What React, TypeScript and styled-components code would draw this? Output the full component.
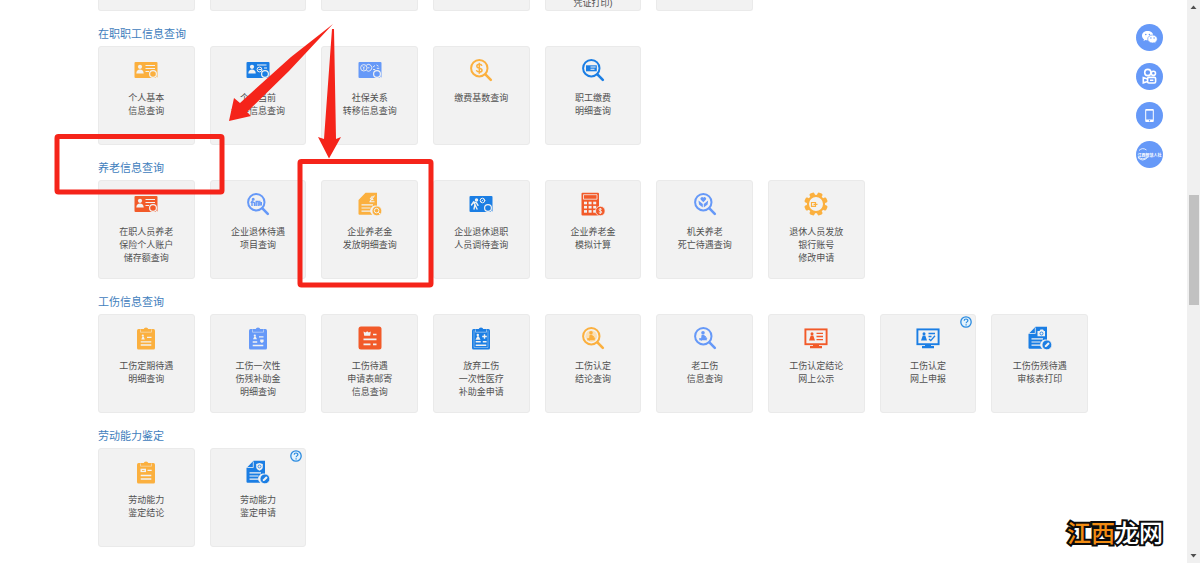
import React from 'react';
import styled, { createGlobalStyle } from 'styled-components';

const YELLOW = '#fbb03f';
const BLUE = '#1b7ee4';
const SKY = '#6699f8';
const RED = '#f25a29';
const CARD = '#f2f2f2';
const MARK = '#f5241a';

const GlobalStyle = createGlobalStyle`
  * { box-sizing: border-box; }
  body {
    margin: 0;
    background: #fff;
    font-family: "Liberation Sans", "Noto Sans CJK SC", sans-serif;
  }
`;

const Page = styled.div`
  position: relative;
  display: flex;
  min-height: 100vh;
  overflow: hidden;
`;

const Main = styled.main`
  flex: 1;
  padding: 0 99px 16px 98px;
`;

const Section = styled.section`
  display: flex;
  flex-direction: column;
`;

const Heading = styled.h2`
  margin: 0;
  padding: 15px 0 4px;
  font-size: 11px;
  line-height: 16px;
  font-weight: 400;
  color: #3f80bd;
`;

const Grid = styled.ul`
  display: grid;
  grid-template-columns: repeat(9, 1fr);
  gap: 15px;
  margin: 0;
  padding: 0;
  list-style: none;
`;

const Cell = styled.li`
  position: relative;
`;

const Card = styled.a`
  display: flex;
  flex-direction: column;
  align-items: center;
  gap: 10px;
  height: 99px;
  padding-top: 11px;
  border: 1px solid #eaeaea;
  border-radius: 3px;
  background: ${CARD};
  color: #505050;
  font-size: 9px;
  line-height: 13px;
  text-align: center;
  text-decoration: none;
`;

const CardTail = styled(Card)`
  height: 11px;
  padding: 0;
  justify-content: flex-end;
  overflow: hidden;
  border-top: 0;
  border-radius: 0 0 3px 3px;
`;

const Line = styled.span`
  display: block;
  flex-shrink: 0;
  white-space: nowrap;
`;

const Help = styled.button`
  position: absolute;
  top: 2px;
  right: 4px;
  width: 12px;
  height: 12px;
  padding: 0;
  border: 0;
  background: none;
  cursor: pointer;
  svg { display: block; }
`;

const Dock = styled.nav`
  position: absolute;
  top: 24px;
  right: 37px;
  display: flex;
  flex-direction: column;
  gap: 12px;
`;

const DockButton = styled.button`
  position: relative;
  display: flex;
  align-items: center;
  justify-content: center;
  width: 27px;
  height: 27px;
  padding: 0;
  border: 0;
  border-radius: 50%;
  background: ${SKY};
  color: #fff;
  font-family: inherit;
  font-size: 4px;
  font-weight: 700;
  white-space: nowrap;
  cursor: pointer;
`;

const Swoosh = styled.svg`
  position: absolute;
  inset: 0;
`;

const Scrollbar = styled.div`
  display: flex;
  flex-direction: column;
  align-items: center;
  width: 13px;
  background: #f0f0f0;
`;

const Arrow = styled.svg`
  flex: none;
  width: 13px;
  height: 14px;
`;

const Gap = styled.div<{ $grow: number }>`
  flex: ${p => p.$grow} 0 0;
`;

const Thumb = styled.div`
  flex: 110 0 0;
  width: 10px;
  background: #c1c1c1;
`;

const Marks = styled.svg`
  position: absolute;
  top: 0;
  left: 0;
  pointer-events: none;
`;

const Watermark = styled.div`
  position: absolute;
  right: 37px;
  bottom: 13px;
  font-family: "Noto Sans CJK SC", sans-serif;
  font-size: 24px;
  line-height: 36px;
  font-weight: 500;
  color: #fff;
  -webkit-text-stroke: 4px #0c0c0c;
  paint-order: stroke fill;
  span { color: #f28c13; }
`;

type IconName =
  | 'idLines' | 'idAt' | 'idCoins' | 'idRetire'
  | 'magDollar' | 'magCard' | 'magPeople' | 'magHeart' | 'magWorker' | 'magWorkerSoft'
  | 'docPen' | 'docShield' | 'docCamera' | 'calc' | 'gear'
  | 'clip' | 'clipPlus' | 'clipSeal' | 'clipPlain' | 'form'
  | 'screenLines' | 'screenCheck';

const Person = () => (
  <g fill={CARD}>
    <circle cx="6" cy="8.8" r="2.1" />
    <path d="M2.3 15.5c0-2.8 1.6-4 3.7-4s3.7 1.2 3.7 4z" />
  </g>
);

const Lens = ({ c }: { c: string }) => (
  <g fill="none" stroke={CARD} strokeWidth="1.2">
    <circle cx="19" cy="16" r="3.4" fill={c} />
    <path d="M21.4 18.4l2 2" />
  </g>
);

const Worker = ({ c }: { c: string }) => (
  <g fill={c}>
    <circle cx="10" cy="6.7" r="1.8" />
    <path d="M8.6 8.7h2.6l1.4 2.5 1.6 3H6.2l.6-2.2 1.3.3z" />
    <path d="M6.2 12.5l2.4 2M12 10l2 3" stroke={c} strokeWidth="1" />
  </g>
);

const Mag = ({ c, children }: { c: string; children: React.ReactNode }) => (
  <>
    <circle cx="10.3" cy="10.2" r="8.2" fill="none" stroke={c} strokeWidth="2" />
    <path d="M16.4 16.4l5.4 5.4" stroke={c} strokeWidth="2.6" strokeLinecap="round" />
    {children}
  </>
);

const Id = ({ c, children }: { c: string; children: React.ReactNode }) => (
  <>
    <rect x=".5" y="4" width="23" height="16" rx="1" fill={c} />
    {children}
    <Lens c={c} />
  </>
);

const Clip = ({ c, children }: { c: string; children: React.ReactNode }) => (
  <>
    <rect x="3" y="3" width="18" height="20.5" rx="1.5" fill={c} />
    <path d="M7 6V3.2h2.6a2.5 2.5 0 0 1 4.8 0H17V6z" fill={c} />
    <path d="M6.5 3.4v2.800h11v-2.800" fill="none" stroke={CARD} strokeWidth=".5" />
    {children}
  </>
);

const Screen = ({ c, children }: { c: string; children: React.ReactNode }) => (
  <>
    <rect x="1.4" y="3.4" width="21.2" height="14.8" fill="none" stroke={c} strokeWidth="1.9" />
    <path d="M9 18h6v2h3v2.200H6V20h3z" fill={c} />
    <circle cx="8" cy="7.700" r="1.500" fill={c} />
    <path d="M5 14.500l1.800-5h2.500l1.700 5z" fill={c} />
    {children}
  </>
);

const Doc = ({ c, children }: { c: string; children: React.ReactNode }) => (
  <>
    <path d="M7.500 .7H19V14a5 5 0 0 0-4.600 8.800H1.500a1 1 0 0 1-1-1V8z" fill={c} />
    <path d="M3.500 12.900H15M3.500 16h9M3.500 19.100h9" stroke={CARD} strokeWidth="1.200" />
    {children}
  </>
);

const Fold = () => <path d="M7.300 1.500v6H1.200" fill="none" stroke={CARD} strokeWidth=".8" />;

const Pen = ({ c }: { c: string }) => (
  <>
    <circle cx="18.900" cy="18.900" r="4.900" fill={c} stroke={CARD} strokeWidth=".8" />
    <path d="M16.700 21.200l.5-2 3-3 1.500 1.500-3 3z" fill={CARD} />
  </>
);

const drawings: Record<IconName, (c: string) => React.ReactNode> = {
  idLines: c => (
    <Id c={c}>
      <Person />
      <path d="M11.500 7.500h9.500M11.500 10.500h9.500M11.500 13.500h3.500" stroke={CARD} strokeWidth="1.100" />
    </Id>
  ),
  idAt: c => (
    <Id c={c}>
      <Person />
      <g fill="none" stroke={CARD} strokeWidth="1">
        <path d="M11 7h9.500M18 10h3" />
        <circle cx="13.500" cy="11.500" r="2.400" />
        <path d="M12.500 11.500h3" />
      </g>
    </Id>
  ),
  idCoins: c => (
    <Id c={c}>
      <g fill="none" stroke={CARD} strokeWidth=".9">
        <circle cx="5.800" cy="9.800" r="3.200" />
        <path d="M8.500 7a3.400 3.400 0 1 1 0 5.600" />
        <path d="M4.800 8.500l1 1.300 1-1.300M5.800 9.800v2M9.500 9.800h2" />
        <path d="M15 9l2-1.500M18.500 7l2 1.200M15 11.500h2.200M18.800 10.300h2.500" />
      </g>
    </Id>
  ),
  idRetire: c => (
    <Id c={c}>
      <g fill="none" stroke={CARD} strokeWidth="1.400" strokeLinecap="round">
        <path d="M5 17l1-4.500L4.500 10 2.500 13M4.500 9.800l3 1 1.500 2.500M6 12.500l2 4.500" />
        <circle cx="7.500" cy="8" r="1" fill={CARD} />
        <circle cx="13.500" cy="8.500" r="2.300" strokeWidth="1" />
        <path d="M12.800 9.200l1.500-1.500" strokeWidth=".8" />
      </g>
    </Id>
  ),
  magDollar: c => (
    <Mag c={c}>
      <path d="M12.900 7.900c-.3-1.200-1.300-1.600-2.600-1.600-1.500 0-2.500.7-2.500 1.900 0 2.700 5.200 1.300 5.200 4 0 1.200-1.100 1.900-2.700 1.900-1.500 0-2.600-.6-2.900-1.900M10.300 4.700v11" fill="none" stroke={c} strokeWidth="1.500" />
    </Mag>
  ),
  magCard: c => (
    <Mag c={c}>
      <rect x="5" y="7.300" width="10.800" height="6" fill={c} />
      <path d="M9.500 9h5.200M9.500 11.300h4" stroke={CARD} strokeWidth="1.100" />
    </Mag>
  ),
  magPeople: c => (
    <Mag c={c}>
      <g fill="none" stroke={c} strokeWidth="1.400">
        <path d="M6 14V9.500L5 11M6.200 9.500l2.300 1.500V14M10.200 14V9.500h2V14M13.800 8.800v5M15.300 10v3.500" />
        <circle cx="7.200" cy="7.200" r=".8" />
      </g>
    </Mag>
  ),
  magHeart: c => (
    <Mag c={c}>
      <g fill={c}>
        <path d="M10.300 10.300L7.800 7.800a1.600 1.600 0 0 1 2.500-2 1.600 1.600 0 0 1 2.500 2z" />
        <path d="M5.500 8.500l4.300 3.500v3.500L6 12.500zM15.100 8.500l-4.300 3.500v3.500l3.800-3z" />
      </g>
    </Mag>
  ),
  magWorker: c => <Mag c={c}><Worker c={c} /></Mag>,
  magWorkerSoft: c => (
    <Mag c={c}>
      <circle cx="10.300" cy="10.200" r="5.800" fill="#fbe0b4" />
      <Worker c={c} />
    </Mag>
  ),
  docPen: c => (
    <Doc c={c}>
      <path d="M12 9.500l4.500-6M14.500 4l-2 2.500 3 1.500M11.500 9.700h5" fill="none" stroke={CARD} strokeWidth="1.100" />
      <circle cx="18.900" cy="18.900" r="4.900" fill={c} stroke={CARD} strokeWidth=".8" />
      <circle cx="18.600" cy="18.600" r="2.300" fill="none" stroke={CARD} strokeWidth="1" />
      <path d="M20.200 20.200l1.800 1.800" stroke={CARD} strokeWidth="1" />
    </Doc>
  ),
  docShield: c => (
    <Doc c={c}>
      <Fold />
      <path d="M13.500 3l3.300 1v3c0 1.800-1.500 3-3.300 3.700C11.700 10 10.200 8.800 10.200 7V4z" fill={CARD} />
      <circle cx="13.500" cy="6.500" r="1.500" fill="none" stroke={c} strokeWidth=".8" />
      <Pen c={c} />
    </Doc>
  ),
  docCamera: c => (
    <Doc c={c}>
      <Fold />
      <path d="M9.500 5h2l1-1.500h2.500l1 1.500h1v5.300H9.500z" fill={CARD} />
      <circle cx="13.500" cy="7.500" r="1.500" fill="none" stroke={c} strokeWidth=".9" />
      <Pen c={c} />
    </Doc>
  ),
  calc: c => (
    <>
      <rect x=".5" y=".7" width="17.500" height="22.800" rx="1" fill={c} />
      <path d="M2.500 2.700h13.500v4.500H2.500z" fill="none" stroke={CARD} strokeWidth=".8" />
      <g fill={CARD}>
        {[9.7, 13.9, 18.1].map(y =>
          [3, 7.6, 12.2].map(x => <rect key={`${x}-${y}`} x={x} y={y} width="3" height="2.600" />)
        )}
      </g>
      <circle cx="19.300" cy="19" r="4.800" fill={c} stroke={CARD} strokeWidth=".8" />
      <path d="M20.800 17.500c-1-1.200-3-.8-2.800.4.200 1.200 2.800.8 2.800 2.200 0 1.200-2 1.400-3 .3M19.300 16v6" fill="none" stroke={CARD} strokeWidth=".9" />
    </>
  ),
  gear: c => (
    <>
      <circle cx="12" cy="12" r="8.100" fill="none" stroke={c} strokeWidth="2.200" />
      <g fill={c}>
        {[22.5, 67.5, 112.5, 157.5, 202.5, 247.5, 292.5, 337.5].map(a => (
          <rect key={a} x="9.400" y=".2" width="5.200" height="4.400" rx="1.400" transform={`rotate(${a} 12 12)`} />
        ))}
      </g>
      <path d="M7.500 10.500h4v3.800h-4zM9.500 12.400h4" fill="none" stroke={c} strokeWidth="1.200" />
    </>
  ),
  clip: c => (
    <Clip c={c}>
      <circle cx="8.800" cy="9.500" r="1.100" fill={CARD} />
      <path d="M7.300 13.400h3.500l-1.200-3H8.500z" fill={CARD} />
      <path d="M13 11.300h4.500M6.700 15.800h10.600M6.700 19h10.600" stroke={CARD} strokeWidth="1.300" />
    </Clip>
  ),
  clipSeal: c => (
    <Clip c={c}>
      <circle cx="8.800" cy="9.500" r="1.100" fill={CARD} />
      <path d="M7 13.200h4l-1.500-3H8.500zM14.200 13.500h3.400v2.200l-1.700 1.300-1.700-1.300z" fill={CARD} />
      <path d="M13 10.800h4.500M6.700 16h4.500M6.700 19.500h10.600" stroke={CARD} strokeWidth="1.300" />
    </Clip>
  ),
  clipPlus: c => (
    <Clip c={c}>
      <path d="M5 4.500v17h14v-17" fill="none" stroke={CARD} strokeWidth=".4" />
      <circle cx="8.800" cy="9" r="1.200" fill={CARD} />
      <path d="M6.500 13.700h5l-1.800-3.500H8.300z" fill={CARD} />
      <path d="M13.200 10.500h4.600M15.500 8.300v4.500M6.700 15.800h5M13.800 15.800h3.800M6.700 19.300h10.600" stroke={CARD} strokeWidth="1.400" />
    </Clip>
  ),
  clipPlain: c => (
    <Clip c={c}>
      <rect x="6.500" y="8.700" width="5.500" height="3.400" fill={CARD} />
      <path d="M13.500 10.400h4.200M6.700 15.500h10.600M6.700 19h10.600" stroke={CARD} strokeWidth="1.300" />
      <path d="M8 10.500h2.500" stroke={c} strokeWidth=".8" />
    </Clip>
  ),
  form: c => (
    <>
      <rect x=".5" y=".5" width="23" height="23" rx="2.500" fill={c} />
      <path d="M5.500 5.500l2 1 1.700-1.300 1.600 1.300 2-1-.6 4.300H6.200z" fill={CARD} />
      <path d="M15 8.500h3.500M5.500 13.300h13M5.500 18.300h7M15 18.300h3.500" stroke={CARD} strokeWidth="1.700" />
    </>
  ),
  screenLines: c => (
    <Screen c={c}>
      <path d="M12.500 7.300h6.500M12.500 10.500h6.500M12.500 13.700h6.500" stroke={c} strokeWidth="1.300" />
    </Screen>
  ),
  screenCheck: c => (
    <Screen c={c}>
      <path d="M12.500 7.500h6.500M12.500 10.500h3M13 13l1.800 1.600L19 9.800" fill="none" stroke={c} strokeWidth="1.300" />
    </Screen>
  ),
};

const Icon = ({ name, color }: { name: IconName; color: string }) => (
  <svg width="24" height="24" viewBox="0 0 24 24" aria-hidden="true">{drawings[name](color)}</svg>
);

type Item = { icon: IconName; color: string; lines: string[]; help?: boolean };

const sections: { title: string; items: Item[] }[] = [
  {
    title: '在职职工信息查询',
    items: [
      { icon: 'idLines', color: YELLOW, lines: ['个人基本', '信息查询'] },
      { icon: 'idAt', color: BLUE, lines: ['个人当前', '参保信息查询'] },
      { icon: 'idCoins', color: SKY, lines: ['社保关系', '转移信息查询'] },
      { icon: 'magDollar', color: YELLOW, lines: ['缴费基数查询'] },
      { icon: 'magCard', color: BLUE, lines: ['职工缴费', '明细查询'] },
    ],
  },
  {
    title: '养老信息查询',
    items: [
      { icon: 'idLines', color: RED, lines: ['在职人员养老', '保险个人账户', '储存额查询'] },
      { icon: 'magPeople', color: SKY, lines: ['企业退休待遇', '项目查询'] },
      { icon: 'docPen', color: YELLOW, lines: ['企业养老金', '发放明细查询'] },
      { icon: 'idRetire', color: BLUE, lines: ['企业退休退职', '人员调待查询'] },
      { icon: 'calc', color: RED, lines: ['企业养老金', '模拟计算'] },
      { icon: 'magHeart', color: SKY, lines: ['机关养老', '死亡待遇查询'] },
      { icon: 'gear', color: YELLOW, lines: ['退休人员发放', '银行账号', '修改申请'] },
    ],
  },
  {
    title: '工伤信息查询',
    items: [
      { icon: 'clip', color: YELLOW, lines: ['工伤定期待遇', '明细查询'] },
      { icon: 'clipSeal', color: SKY, lines: ['工伤一次性', '伤残补助金', '明细查询'] },
      { icon: 'form', color: RED, lines: ['工伤待遇', '申请表邮寄', '信息查询'] },
      { icon: 'clipPlus', color: BLUE, lines: ['放弃工伤', '一次性医疗', '补助金申请'] },
      { icon: 'magWorkerSoft', color: YELLOW, lines: ['工伤认定', '结论查询'] },
      { icon: 'magWorker', color: SKY, lines: ['老工伤', '信息查询'] },
      { icon: 'screenLines', color: RED, lines: ['工伤认定结论', '网上公示'] },
      { icon: 'screenCheck', color: BLUE, lines: ['工伤认定', '网上申报'], help: true },
      { icon: 'docCamera', color: BLUE, lines: ['工伤伤残待遇', '审核表打印'] },
    ],
  },
  {
    title: '劳动能力鉴定',
    items: [
      { icon: 'clipPlain', color: YELLOW, lines: ['劳动能力', '鉴定结论'] },
      { icon: 'docShield', color: BLUE, lines: ['劳动能力', '鉴定申请'], help: true },
    ],
  },
];

const tails = ['', '', '', '', '凭证打印)', ''];

export default function App() {
  return (
    <Page>
      <GlobalStyle />
      <Main>
        <Grid>
          {tails.map((text, i) => (
            <Cell key={i}>
              <CardTail href="#"><Line>{text}</Line></CardTail>
            </Cell>
          ))}
        </Grid>
        {sections.map(section => (
          <Section key={section.title}>
            <Heading>{section.title}</Heading>
            <Grid>
              {section.items.map(item => (
                <Cell key={item.lines.join('')}>
                  <Card href="#">
                    <Icon name={item.icon} color={item.color} />
                    <span>
                      {item.lines.map(line => <Line key={line}>{line}</Line>)}
                    </span>
                  </Card>
                  {item.help && (
                    <Help type="button" aria-label="帮助">
                      <svg width="12" height="12" viewBox="0 0 12 12">
                        <circle cx="6" cy="6" r="5.200" fill="#e4f3fc" stroke="#2b8be0" strokeWidth="1.300" />
                        <path d="M4.200 4.800c0-2.400 3.700-2.300 3.700-.2 0 1.300-1.800 1.300-1.800 2.700M6.100 8.300v1.200" fill="none" stroke="#2b8be0" strokeWidth="1.200" />
                      </svg>
                    </Help>
                  )}
                </Cell>
              ))}
            </Grid>
          </Section>
        ))}
      </Main>

      <Scrollbar aria-hidden="true">
        <Arrow viewBox="0 0 13 14"><path d="M3.500 9L6.500 5.500 9.500 9z" fill="#505050" /></Arrow>
        <Gap $grow={181} />
        <Thumb />
        <Gap $grow={244} />
        <Arrow viewBox="0 0 13 14"><path d="M3.500 5L6.500 8.500 9.500 5z" fill="#505050" /></Arrow>
      </Scrollbar>

      <Dock aria-label="快捷入口">
        <DockButton type="button" aria-label="微信">
          <svg width="17" height="17" viewBox="0 0 17 17">
            <path d="M6.600 2C3.400 2 1 4.100 1 6.700c0 1.500.8 2.800 2 3.600l-.5 1.700 2-1c.7.200 1.400.3 2.100.3 3.200 0 5.700-2 5.700-4.600S9.800 2 6.600 2z" fill="#fff" />
            <path d="M11.500 6c-2.700 0-4.800 1.800-4.800 4s2.100 4 4.800 4c.6 0 1.200-.1 1.700-.3l1.700.9-.4-1.500c1.100-.7 1.800-1.800 1.800-3.100 0-2.200-2.100-4-4.800-4z" fill="#fff" stroke={SKY} strokeWidth=".7" />
            <g fill={SKY}>
              <circle cx="4.800" cy="5.500" r=".8" /><circle cx="8.400" cy="5.500" r=".8" />
              <circle cx="9.900" cy="9" r=".7" /><circle cx="13.100" cy="9" r=".7" />
            </g>
          </svg>
        </DockButton>
        <DockButton type="button" aria-label="快手">
          <svg width="17" height="17" viewBox="0 0 17 17" fill="none" stroke="#fff" strokeWidth="1.600">
            <circle cx="6.800" cy="4.500" r="3.100" />
            <circle cx="12.400" cy="5.300" r="2.100" />
            <rect x="6.600" y="9.400" width="8" height="5.600" rx="1.200" />
            <path d="M6.600 11L2.300 9.600v5.200l4.300-1.300M9 12.200h3.400" />
          </svg>
        </DockButton>
        <DockButton type="button" aria-label="手机">
          <svg width="17" height="17" viewBox="0 0 17 17">
            <rect x="4.200" y="2" width="8.600" height="13" rx="1" fill="#fff" />
            <rect x="5.200" y="3.700" width="6.600" height="8.800" fill={SKY} />
            <circle cx="8.500" cy="13.700" r=".7" fill={SKY} />
          </svg>
        </DockButton>
        <DockButton type="button">
          <Swoosh width="27" height="27" viewBox="0 0 27 27" aria-hidden="true">
            <path d="M3 9.500q3.500-3.500 7.500-.5M2 16.500q4.500 5 9.500 0-4.500 2.800-9.500 0z" fill="none" stroke="#fff" strokeWidth=".8" />
          </Swoosh>
          江西智慧人社
        </DockButton>
      </Dock>

      <Marks width="480" height="300" viewBox="0 0 480 300" aria-hidden="true">
        <g fill="none" stroke={MARK} strokeWidth="5">
          <rect x="57" y="136.500" width="165" height="55.500" rx="1.500" />
          <rect x="300" y="161.500" width="131" height="123.500" rx="1.500" />
        </g>
        <g fill={MARK}>
          <path d="M333 24L291 57 240 103 234 98 229 121 251 116 247 112 289 71z" />
          <path d="M332 29L334 29 336 139 341 137 329 158.500 318 137 324 139z" />
        </g>
      </Marks>

      <Watermark><span>江西</span>龙网</Watermark>
    </Page>
  );
}
